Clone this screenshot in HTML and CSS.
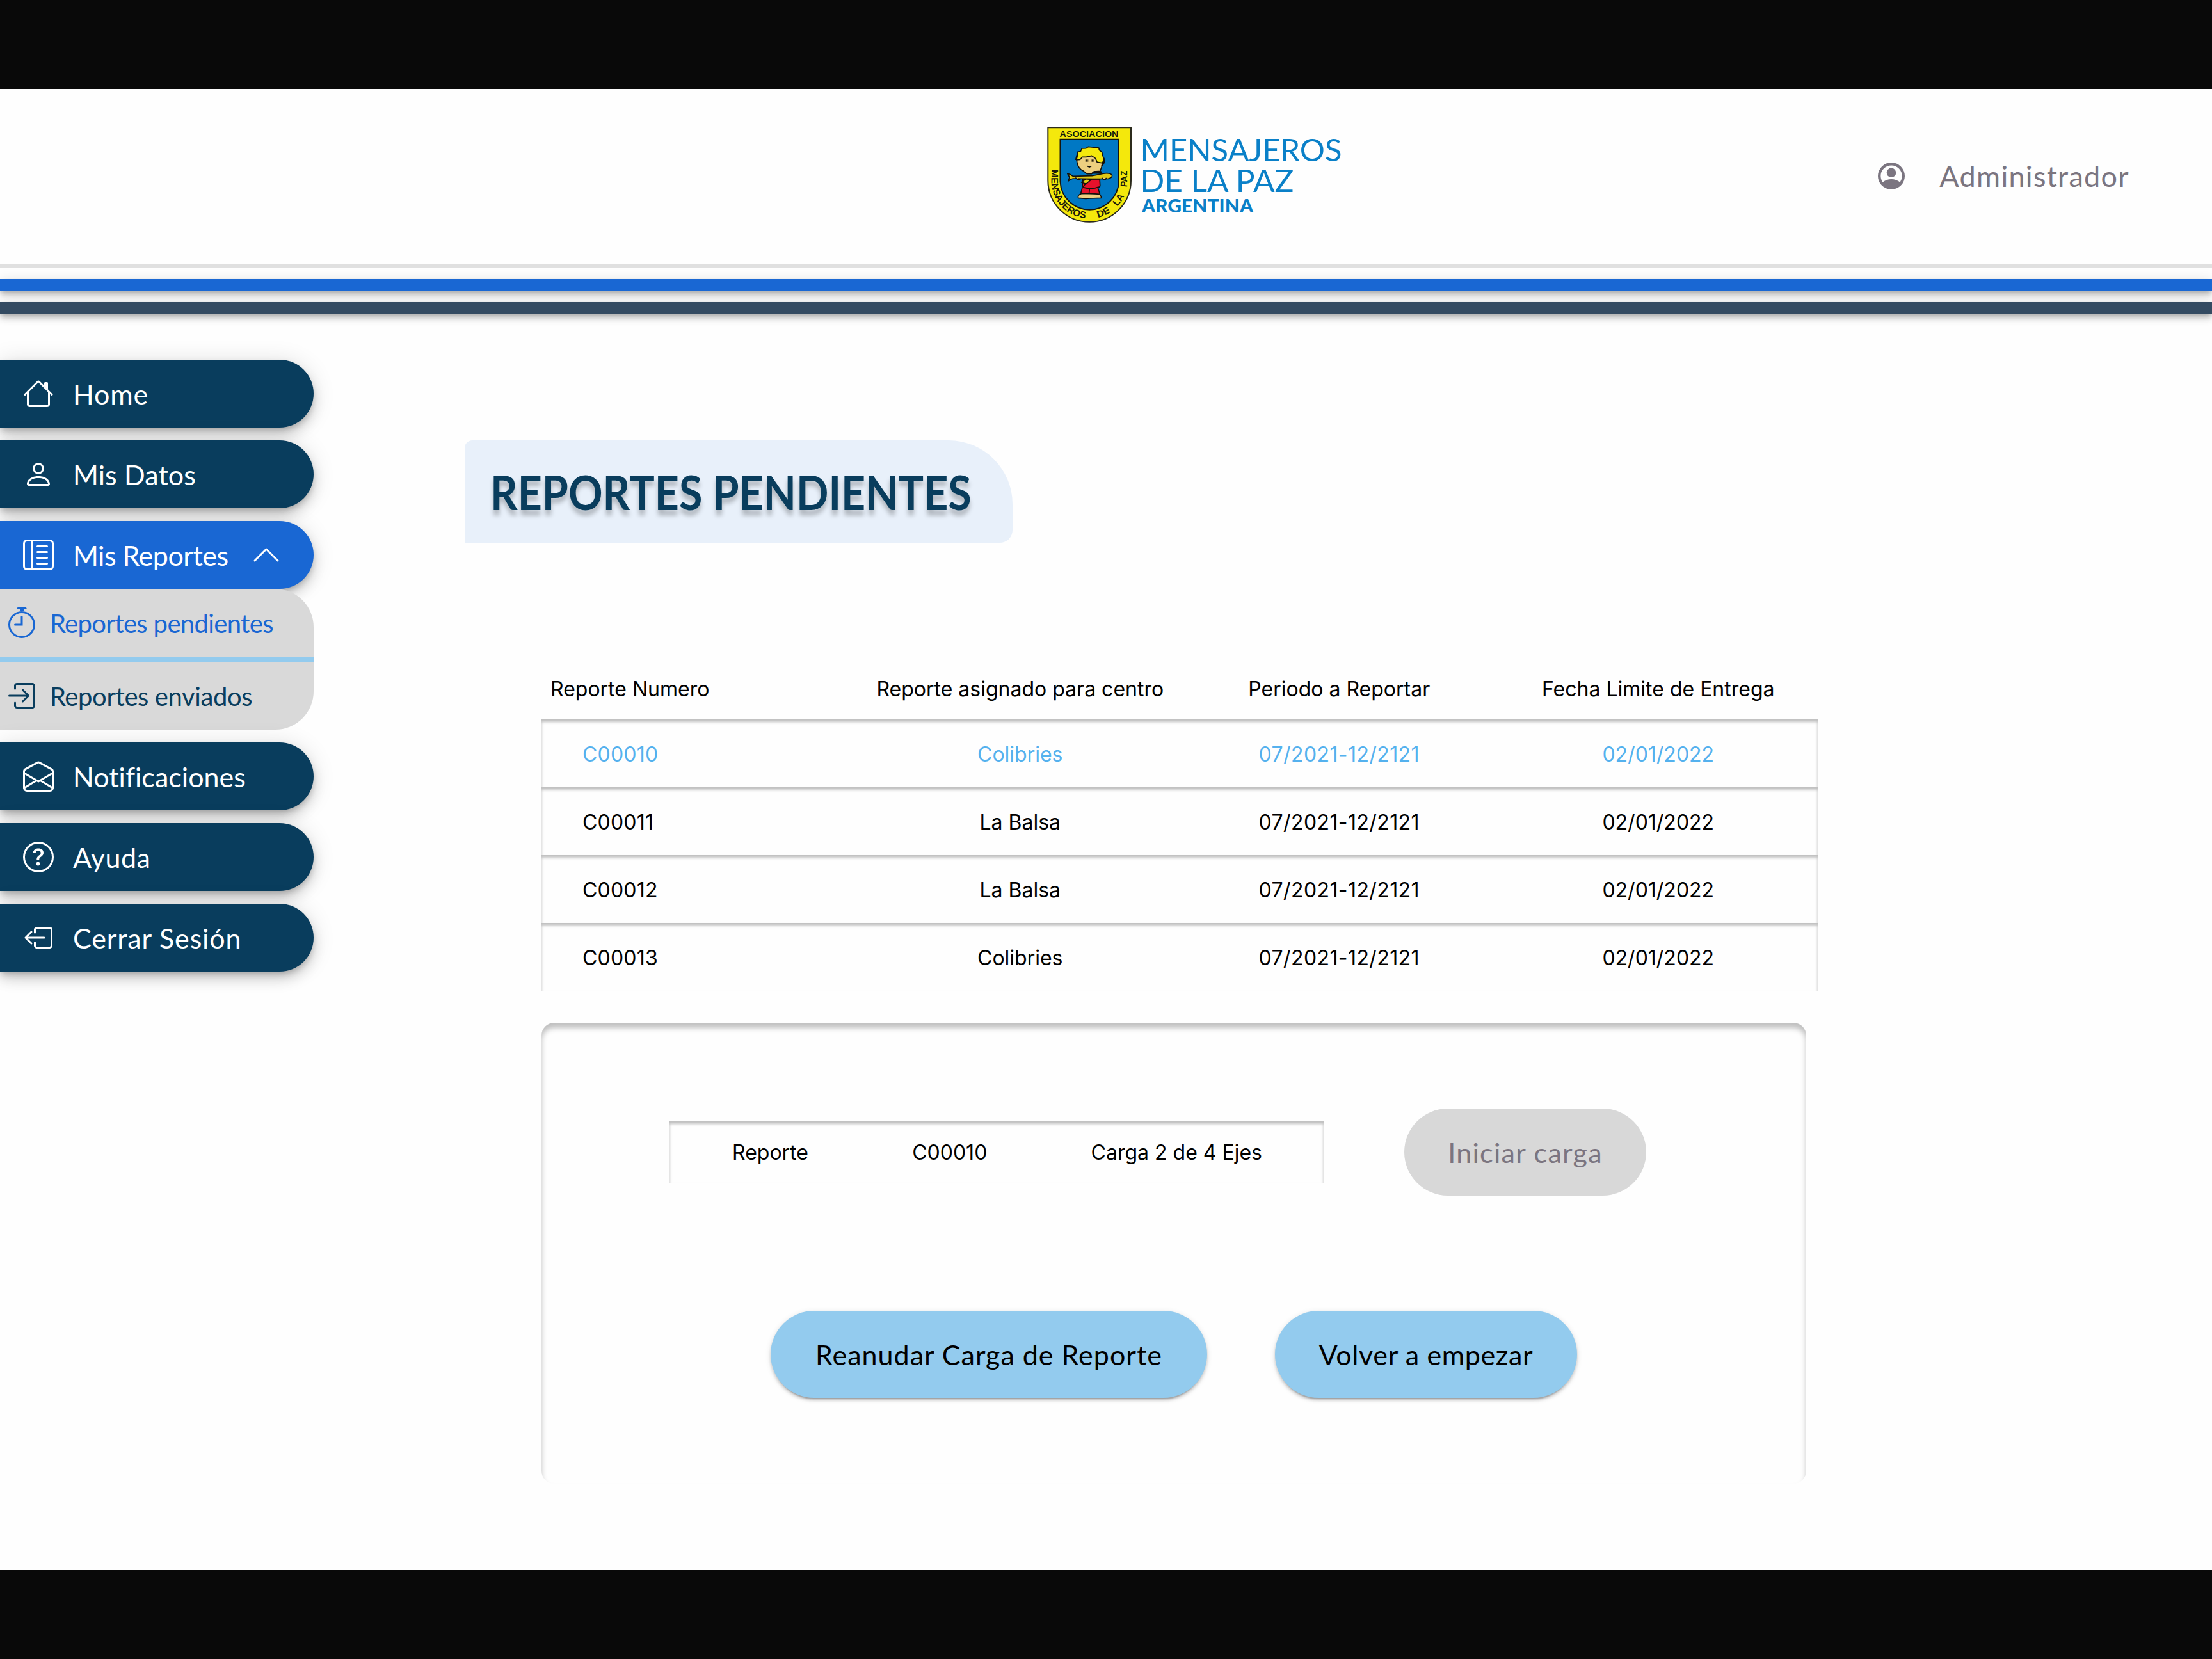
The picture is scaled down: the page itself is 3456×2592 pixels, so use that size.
FILE: index.html
```
<!DOCTYPE html>
<html lang="es">
<head>
<meta charset="utf-8">
<title>Reportes pendientes</title>
<link rel="stylesheet" href="styles.css">
</head>
<body>
<div class="page">
  <header class="header">
    <svg class="logo" viewBox="0 0 460 152" role="img" aria-label="Mensajeros de la Paz Argentina">
      <defs><path id="ring" d="M6.500 66V84A59.500 59.500 0 0 0 125.500 84V40"/></defs>
      <path d="M1.300 1.300H131V84A64.800 64.800 0 0 1 1.300 84Z" fill="#f4e80c" stroke="#2b2a1c" stroke-width="2"/>
      <path d="M20.500 19.800H112V86A45.800 45.800 0 0 1 20.500 86Z" fill="#0078c4" stroke="#15150f" stroke-width="2"/>
      <g class="seal">
        <text x="19.500" y="15.600" textLength="92" lengthAdjust="spacingAndGlyphs" font-size="13.500">ASOCIACION</text>
        <text font-size="15"><textPath href="#ring" startOffset="1" textLength="104" lengthAdjust="spacingAndGlyphs">MENSAJEROS</textPath></text>
        <text font-size="15"><textPath href="#ring" startOffset="125" textLength="22" lengthAdjust="spacingAndGlyphs">DE</textPath></text>
        <text font-size="15"><textPath href="#ring" startOffset="160" textLength="20" lengthAdjust="spacingAndGlyphs">LA</textPath></text>
        <text font-size="15"><textPath href="#ring" startOffset="194" textLength="26" lengthAdjust="spacingAndGlyphs">PAZ</textPath></text>
      </g>
      <g transform="translate(-26 -18) scale(.3317 .3333)" stroke="#14120c" stroke-width="5" stroke-linejoin="round">
        <path d="M225 388Q221 373 240 368L314 367Q334 373 333 388L280 390L260 391Z" fill="#edcf80"/>
        <path d="M246 300L326 300L328 332L318 342L327 370L280 367L237 366L244 340Z" fill="#e8112b"/>
        <path d="M246 338Q290 350 322 336M278 345L276 366M262 320L246 336" fill="none"/>
        <path d="M240 315L262 298L286 302L262 322Z" fill="#e0cc18"/>
        <path d="M218 208Q220 250 250 262L266 275H288L300 264L328 262Q338 240 342 210L300 190H240Z" fill="#edcf80"/>
        <path d="M300 264H332V272H290Z" fill="#14120c"/>
        <path d="M217 210L222 172L236 170L242 156L262 155L272 148L322 153L324 164L336 172L347 213L336 224L314 220L306 202L288 190L262 196L244 196L234 208Z" fill="#f4e80c"/>
        <path d="M222 180L214 210M345 200L346 222L336 238" fill="none" stroke-width="8"/>
        <path d="M174 273Q190 277 200 286L290 284L340 274Q372 268 384 280Q388 292 366 298L290 299L200 297Q188 300 178 309L184 291Z" fill="#dfc916"/>
        <path d="M212 292Q220 306 236 300M336 293Q348 312 358 294" fill="#edcf80"/>
        <path d="M268 238Q277 246 287 238M277 240V246" fill="none"/>
        <path d="M258 213H273M286 213H300" fill="none" stroke-width="10" stroke="#8f7b45"/>
        <path d="M263 213H269M290 213H296" fill="none" stroke-width="9"/>
      </g>
      <g class="brand">
        <text x="145.500" y="53.700" textLength="315" lengthAdjust="spacingAndGlyphs" font-size="49">MENSAJEROS</text>
        <text x="145.500" y="101.700" textLength="240" lengthAdjust="spacingAndGlyphs" font-size="49">DE LA PAZ</text>
        <text class="brand-country" x="148" y="133.500" textLength="174" lengthAdjust="spacingAndGlyphs" font-size="29">ARGENTINA</text>
      </g>
    </svg>
    <div class="user">
      <svg class="user-icon" viewBox="0 0 42 42">
        <circle cx="21" cy="21" r="18.800" fill="none" stroke="currentColor" stroke-width="4.400"/>
        <circle cx="21" cy="15.800" r="7.300" fill="currentColor"/>
        <path d="M6.500 31.500C11 27.500 16 26 21 26S31 27.500 35.500 31.500C32 37.500 27 40 21 40S10 37.500 6.500 31.500Z" fill="currentColor"/>
      </svg>
      <span class="user-name">Administrador</span>
    </div>
  </header>
  <div class="stripes">
    <div class="stripe stripe-blue"></div>
    <div class="stripe stripe-slate"></div>
  </div>
  <div class="body">
    <nav class="menu">
      <a class="item">
        <svg class="icon" viewBox="0 0 16 16" fill="currentColor"><path fill-rule="evenodd" d="M2 13.500V7h1v6.500a.5.5 0 0 0 .5.5h9a.5.5 0 0 0 .5-.5V7h1v6.500a1.500 1.500 0 0 1-1.500 1.500h-9A1.500 1.500 0 0 1 2 13.500zm11-11V6l-2-2V2.500a.5.5 0 0 1 .5-.5h1a.5.5 0 0 1 .5.5z"/><path fill-rule="evenodd" d="M7.293 1.500a1 1 0 0 1 1.414 0l6.647 6.646a.5.5 0 0 1-.708.708L8 2.207 1.354 8.854a.5.5 0 1 1-.708-.708L7.293 1.500z"/></svg>
        <span class="t-home">Home</span>
      </a>
      <a class="item">
        <svg class="icon" viewBox="0 0 16 16" fill="currentColor"><path fill-rule="evenodd" d="M8 8a3 3 0 1 0 0-6 3 3 0 0 0 0 6zm2-3a2 2 0 1 1-4 0 2 2 0 0 1 4 0zm4 8c0 1-1 1-1 1H3s-1 0-1-1 1-4 6-4 6 3 6 4zm-1-.004c-.001-.246-.154-.986-.832-1.664C11.516 10.680 10.289 10 8 10c-2.290 0-3.516.680-4.168 1.332-.678.678-.830 1.418-.832 1.664h10z"/></svg>
        <span class="t-data">Mis Datos</span>
      </a>
      <a class="item item-open">
        <svg class="icon" viewBox="0 0 16 16" fill="currentColor"><path d="M12.500 3a.5.5 0 0 1 0 1h-5a.5.5 0 0 1 0-1h5zm0 3a.5.5 0 0 1 0 1h-5a.5.5 0 0 1 0-1h5zm.5 3.500a.5.5 0 0 0-.5-.5h-5a.5.5 0 0 0 0 1h5a.5.5 0 0 0 .5-.5zm-.5 2.500a.5.5 0 0 1 0 1h-5a.5.5 0 0 1 0-1h5z"/><path d="M16 2a2 2 0 0 0-2-2H2a2 2 0 0 0-2 2v12a2 2 0 0 0 2 2h12a2 2 0 0 0 2-2V2zM4 1v14H2a1 1 0 0 1-1-1V2a1 1 0 0 1 1-1h2zm1 0h9a1 1 0 0 1 1 1v12a1 1 0 0 1-1 1H5V1z"/></svg>
        <span class="t-reports">Mis Reportes</span>
        <svg class="icon chevron" viewBox="0 0 16 16" fill="currentColor"><path d="M7.646 4.646a.5.5 0 0 1 .708 0l6 6a.5.5 0 0 1-.708.708L8 5.707l-5.646 5.647a.5.5 0 0 1-.708-.708l6-6z"/></svg>
      </a>
      <div class="submenu">
        <a class="subitem subitem-active">
          <svg class="icon" viewBox="0 0 48 48" fill="none" stroke="currentColor" stroke-width="3" stroke-linecap="round"><circle cx="24" cy="27" r="19.500"/><path d="M24 14.500V27H13.500"/><path d="M18 1.500H30"/><path d="M24 3V6" stroke-width="6" stroke-linecap="butt"/></svg>
          <span class="t-pending">Reportes pendientes</span>
        </a>
        <a class="subitem">
          <svg class="icon" viewBox="0 0 48 48" fill="none" stroke="currentColor" stroke-width="3" stroke-linecap="round" stroke-linejoin="round"><path d="M13.500 13V8.500A3 3 0 0 1 16.500 5.500H40.500A3 3 0 0 1 43.500 8.500V39.500A3 3 0 0 1 40.500 42.500H16.500A3 3 0 0 1 13.500 39.500V35"/><path d="M4.500 24H34M25.500 15L34.500 24L25.500 33"/></svg>
          <span class="t-sent">Reportes enviados</span>
        </a>
      </div>
      <a class="item item-after">
        <svg class="icon" viewBox="0 0 48 48" fill="none" stroke="currentColor" stroke-width="3" stroke-linecap="round" stroke-linejoin="round"><path d="M1.500 16.500C1.500 14.500 2 13.700 3.500 12.900L22.600 2.400Q24 1.700 25.400 2.400L44.500 12.900C46 13.700 46.500 14.500 46.500 16.500V42A4.500 4.500 0 0 1 42 46.500H6A4.500 4.500 0 0 1 1.500 42Z"/><path d="M2 19L24 32L46 19M2 42L21 30.500M46 42L27 30.500"/></svg>
        <span class="t-notif">Notificaciones</span>
      </a>
      <a class="item">
        <svg class="icon" viewBox="0 0 16 16" fill="currentColor"><circle cx="8" cy="8" r="7.500" fill="none" stroke="currentColor"/><path d="M5.255 5.786a.237.237 0 0 0 .241.247h.825c.138 0 .248-.113.266-.25.090-.656.540-1.134 1.342-1.134.686 0 1.314.343 1.314 1.168 0 .635-.374.927-.965 1.371-.673.489-1.206 1.060-1.168 1.987l.003.217a.25.25 0 0 0 .25.246h.811a.25.25 0 0 0 .25-.25v-.105c0-.718.273-.927 1.010-1.486.609-.463 1.244-.977 1.244-2.056 0-1.511-1.276-2.241-2.673-2.241-1.267 0-2.655.590-2.750 2.286zm1.557 5.763c0 .533.425.927 1.010.927.609 0 1.028-.394 1.028-.927 0-.552-.420-.940-1.029-.940-.584 0-1.009.388-1.009.940z"/></svg>
        <span class="t-help">Ayuda</span>
      </a>
      <a class="item">
        <svg class="icon" viewBox="0 0 48 48" fill="none" stroke="currentColor" stroke-width="3" stroke-linecap="round" stroke-linejoin="round"><path d="M18.500 16V11.500A3 3 0 0 1 21.500 8.500H41.500A3 3 0 0 1 44.500 11.500V36.500A3 3 0 0 1 41.500 39.500H21.500A3 3 0 0 1 18.500 36.500V31.500"/><path d="M33 24H4M13 15L4 24L13 33"/></svg>
        <span class="t-logout">Cerrar Sesión</span>
      </a>
    </nav>
    <main class="content">
      <div class="title-box"><h1 class="title">REPORTES PENDIENTES</h1></div>
      <div class="table">
        <div class="row head"><span>Reporte Numero</span><span>Reporte asignado para centro</span><span>Periodo a Reportar</span><span>Fecha Limite de Entrega</span></div>
        <div class="row line selected"><span>C00010</span><span>Colibries</span><span class="num">07/2021-12/2121</span><span>02/01/2022</span></div>
        <div class="row line"><span>C00011</span><span>La Balsa</span><span class="num">07/2021-12/2121</span><span>02/01/2022</span></div>
        <div class="row line"><span>C00012</span><span>La Balsa</span><span class="num">07/2021-12/2121</span><span>02/01/2022</span></div>
        <div class="row line"><span>C00013</span><span>Colibries</span><span class="num">07/2021-12/2121</span><span>02/01/2022</span></div>
      </div>
      <section class="card">
        <div class="status">
          <div class="progress"><span>Reporte</span><span>C00010</span><span>Carga 2 de 4 Ejes</span></div>
          <button class="btn btn-disabled" disabled>Iniciar carga</button>
        </div>
        <div class="actions">
          <button class="btn btn-resume">Reanudar Carga de Reporte</button>
          <button class="btn btn-restart">Volver a empezar</button>
        </div>
      </section>
    </main>
  </div>
</div>
</body>
</html>
```
FILE: styles.css
```
* { box-sizing: border-box; }

body {
  margin: 0;
  background: #080808;
  font-family: Lato, sans-serif;
}

.page {
  height: 2592px;
  border-top: 139px solid #090909;
  border-bottom: 139px solid #090909;
  background: #fefefe;
  overflow: hidden;
}

/* Header */
.header {
  display: grid;
  grid-template-columns: 1636px 460px 1fr;
  align-items: center;
  height: 279px;
  border-bottom: 6px solid #e0e0e0;
}
.logo {
  grid-column: 2;
  width: 460px;
  height: 152px;
  margin-bottom: 3px;
}
.seal { font-family: "Liberation Sans", Arial, sans-serif; font-weight: 700; fill: #1a190a; }
.brand { fill: #0a80c8; }
.brand-country { font-weight: 900; }
.user {
  display: flex;
  align-items: center;
  justify-self: end;
  gap: 54px;
  padding-right: 129px;
  margin-bottom: 2px;
  color: #7b7580;
}
.user-icon { width: 42px; height: 42px; }
.user-name { font-size: 45px; letter-spacing: 1.28px; }

.stripes {
  display: flex;
  flex-direction: column;
  gap: 18px;
  padding-top: 18px;
}
.stripe {
  height: 18px;
  box-shadow: 0 4px 8px -2px rgba(0,0,0,.2), 0 8px 10px rgba(0,0,0,.14), 0 2px 20px rgba(0,0,0,.12);
}
.stripe-blue { background: #1967d3; }
.stripe-slate { background: #344b62; }

.body { display: flex; }

/* Side menu */
.menu {
  display: flex;
  flex-direction: column;
  width: 490px;
  padding-top: 72px;
}
.item {
  display: flex;
  align-items: center;
  gap: 30px;
  height: 106px;
  margin-bottom: 20px;
  padding-left: 36px;
  border-radius: 0 53px 53px 0;
  background: #093d5d;
  color: #fff;
  font-size: 43px;
  box-shadow: 0 6px 10px -2px rgba(0,0,0,.2), 0 12px 20px rgba(0,0,0,.14), 0 2px 36px rgba(0,0,0,.12);
}
.item-open { margin-bottom: 0; background: #1967d3; }
.item span, .subitem span { padding-top: 1px; }
.icon { flex: none; width: 48px; height: 48px; }
.chevron { margin-left: auto; margin-right: 50px; }
.submenu {
  margin-bottom: 20px;
  border-radius: 0 60px 60px 0;
  background: #d9d9d9;
  overflow: hidden;
}
.subitem {
  display: flex;
  align-items: center;
  gap: 20px;
  height: 106px;
  padding-left: 10px;
  color: #093d5d;
  font-size: 40px;
}
.subitem-active {
  height: 114px;
  border-bottom: 8px solid #93cbee;
  color: #1967d3;
}
.t-home { letter-spacing: .9px; }
.t-data { letter-spacing: .1px; }
.t-reports { letter-spacing: -.5px; }
.t-notif { letter-spacing: .01px; }
.t-help { letter-spacing: .5px; }
.t-logout { letter-spacing: .85px; }
.t-pending { letter-spacing: -.65px; }
.t-sent { letter-spacing: -.4px; }

/* Content */
.content { padding: 198px 0 0 236px; }
.title-box {
  display: flex;
  align-items: center;
  width: 856px;
  height: 160px;
  padding-left: 40px;
  border-radius: 12px 100px 20px 0;
  background: #e8f0fa;
}
.title {
  margin: 0;
  color: #093d5d;
  font-size: 75px;
  font-weight: 700;
  white-space: nowrap;
  text-shadow: 0 8px 8px rgba(0,0,0,.25);
  transform: scaleX(.885);
  transform-origin: left;
}

.table {
  width: 1994px;
  margin: 180px 0 50px 120px;
  font: 32px Inter, sans-serif;
  color: #000;
}
.row {
  display: grid;
  grid-template-columns: repeat(4, 1fr);
  align-items: center;
  height: 96px;
  text-align: center;
}
.row span:first-child { padding-left: 14px; text-align: left; }
.line {
  height: 106px;
  padding-top: 2px;
  box-shadow: inset 0 4px 4px rgba(0,0,0,.25);
}
.line span:first-child { padding-left: 64px; letter-spacing: .2px; }
.num { letter-spacing: .4px; }
.selected { color: #54b1ee; }

.card {
  width: 1976px;
  height: 720px;
  margin-left: 120px;
  padding-top: 134px;
  border-radius: 20px;
  box-shadow: inset 0 8px 8px rgba(0,0,0,.25);
}
.status {
  display: flex;
  align-items: center;
  gap: 126px;
  padding-left: 200px;
}
.progress {
  display: flex;
  align-items: center;
  justify-content: space-between;
  width: 1022px;
  height: 96px;
  padding: 0 96px 0 98px;
  font: 32px Inter, sans-serif;
  box-shadow: inset 0 4px 4px rgba(0,0,0,.25);
}
.actions {
  display: flex;
  justify-content: center;
  gap: 106px;
  margin-top: 180px;
}
.btn {
  height: 136px;
  padding: 0;
  border: 0;
  border-radius: 68px;
  background: #93cbee;
  color: #000;
  font: 43px Lato, sans-serif;
  box-shadow: 0 6px 2px -4px rgba(0,0,0,.2), 0 4px 4px rgba(0,0,0,.14), 0 2px 10px rgba(0,0,0,.12);
}
.btn-disabled {
  width: 378px;
  background: #d8d8d8;
  color: #7b7580;
  letter-spacing: 1.3px;
  box-shadow: none;
}
.btn-resume { width: 682px; letter-spacing: 1px; }
.btn-restart { width: 472px; letter-spacing: .64px; }
```
